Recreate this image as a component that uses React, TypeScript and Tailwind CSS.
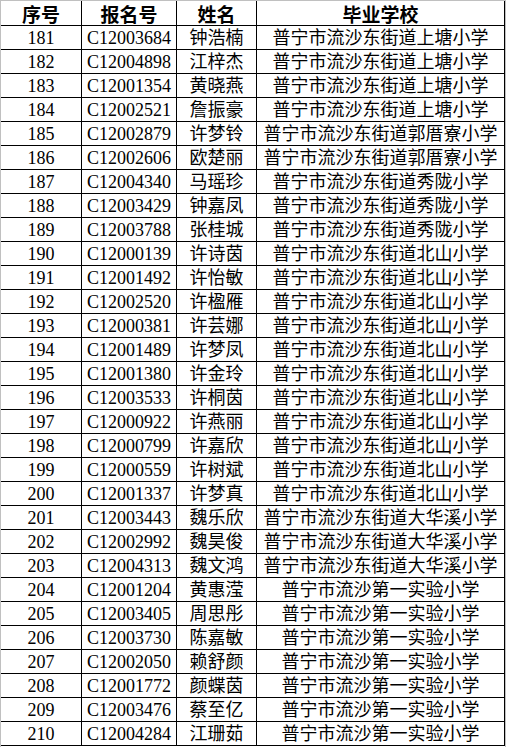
const S1 = "普宁市流沙东街道上塘小学";
const S2 = "普宁市流沙东街道郭厝寮小学";
const S3 = "普宁市流沙东街道秀陇小学";
const S4 = "普宁市流沙东街道北山小学";
const S5 = "普宁市流沙东街道大华溪小学";
const S6 = "普宁市流沙第一实验小学";

const rows: [string, string, string][] = [
  ["C12003684", "钟浩楠", S1],
  ["C12004898", "江梓杰", S1],
  ["C12001354", "黄晓燕", S1],
  ["C12002521", "詹振豪", S1],
  ["C12002879", "许梦铃", S2],
  ["C12002606", "欧楚丽", S2],
  ["C12004340", "马瑶珍", S3],
  ["C12003429", "钟嘉凤", S3],
  ["C12003788", "张桂城", S3],
  ["C12000139", "许诗茵", S4],
  ["C12001492", "许怡敏", S4],
  ["C12002520", "许楹雁", S4],
  ["C12000381", "许芸娜", S4],
  ["C12001489", "许梦凤", S4],
  ["C12001380", "许金玲", S4],
  ["C12003533", "许桐茵", S4],
  ["C12000922", "许燕丽", S4],
  ["C12000799", "许嘉欣", S4],
  ["C12000559", "许树斌", S4],
  ["C12001337", "许梦真", S4],
  ["C12003443", "魏乐欣", S5],
  ["C12002992", "魏昊俊", S5],
  ["C12004313", "魏文鸿", S5],
  ["C12001204", "黄惠滢", S6],
  ["C12003405", "周思彤", S6],
  ["C12003730", "陈嘉敏", S6],
  ["C12002050", "赖舒颜", S6],
  ["C12001772", "颜蝶茵", S6],
  ["C12003476", "蔡至亿", S6],
  ["C12004284", "江珊茹", S6],
];

const cell = "flex items-center justify-center border-r border-black h-full whitespace-nowrap leading-none";

export default function App() {
  return (
    <div
      className="w-[506px] h-[747px] bg-white text-black overflow-hidden"
      style={{ fontFamily: '"Liberation Serif", "Noto Sans CJK SC", serif' }}
    >
      <div className="w-[506px] border-t border-l border-r border-[#c0c0c0] h-[747px] flex flex-col">
        <div
          className="flex h-[25px] border-b border-black text-[19px] font-bold shrink-0"
          style={{ fontFamily: '"Noto Sans CJK SC", sans-serif' }}
        >
          <div className={`${cell} w-[81px]`}>序号</div>
          <div className={`${cell} w-[95px]`}>报名号</div>
          <div className={`${cell} w-[80px]`}>姓名</div>
          <div className={`${cell} w-[248px]`}>毕业学校</div>
        </div>
        {rows.map((r, i) => (
          <div key={i} className="flex h-[24px] border-b border-black text-[18px] shrink-0">
            <div className={`${cell} w-[81px]`}>{181 + i}</div>
            <div className={`${cell} w-[95px]`}>{r[0]}</div>
            <div className={`${cell} w-[80px]`}>{r[1]}</div>
            <div className={`${cell} w-[248px]`}>{r[2]}</div>
          </div>
        ))}
      </div>
    </div>
  );
}
